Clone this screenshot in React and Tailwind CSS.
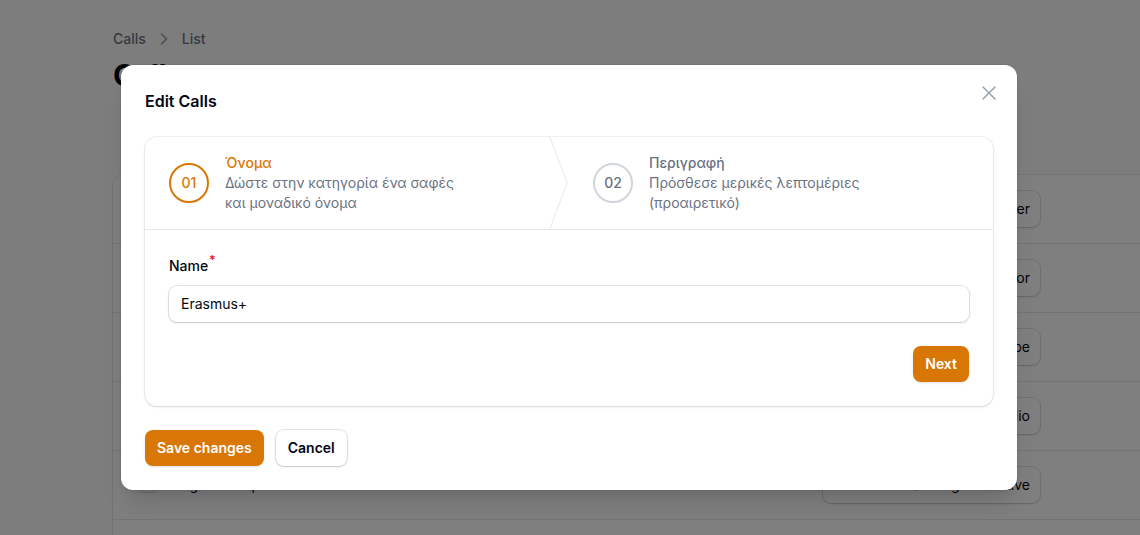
import { ChevronRight, X } from "lucide-react";

const rows = [
  { title: "Horizon Europe", role: "Project Partner" },
  { title: "Creative Europe", role: "Lead Coordinator" },
  { title: "Interreg", role: "Open Scope" },
  { title: "LIFE Programme", role: "Project Portfolio" },
  { title: "Digital Europe", role: "Strategic Initiative" },
];

function Steps() {
  return (
    <div className="grid grid-cols-2 border-b border-gray-200">
      <div className="relative flex">
        <div className="flex h-full items-center gap-x-4 px-6 py-4">
          <div className="flex h-10 w-10 shrink-0 items-center justify-center rounded-full border-2 border-[#d97706]">
            <span className="text-sm font-medium text-[#d97706]">01</span>
          </div>
          <div className="grid max-w-60 justify-items-start text-start">
            <span className="text-sm font-medium text-[#d97706]">Όνομα</span>
            <span className="text-sm text-gray-500">Δώστε στην κατηγορία ένα σαφές και μοναδικό όνομα</span>
          </div>
        </div>
        <svg
          className="absolute right-0 top-0 h-full w-5 text-gray-200"
          fill="none"
          preserveAspectRatio="none"
          viewBox="0 0 22 80"
        >
          <path d="M0 -2L20 40L0 82" stroke="currentColor" strokeLinejoin="round" vectorEffect="non-scaling-stroke" />
        </svg>
      </div>
      <div className="relative flex">
        <div className="flex h-full items-center gap-x-4 px-6 py-4">
          <div className="flex h-10 w-10 shrink-0 items-center justify-center rounded-full border-2 border-gray-300">
            <span className="text-sm font-medium text-gray-500">02</span>
          </div>
          <div className="grid max-w-60 justify-items-start text-start">
            <span className="text-sm font-medium text-gray-500">Περιγραφή</span>
            <span className="text-sm text-gray-500">Πρόσθεσε μερικές λεπτομέριες (προαιρετικό)</span>
          </div>
        </div>
      </div>
    </div>
  );
}

export default function App() {
  return (
    <div className="relative h-[535px] w-[1140px] overflow-hidden bg-[#fbfbfb] font-['Inter',sans-serif]">
      {/* page behind the modal */}
      <div className="pl-[113px] pt-[29px]">
        <nav className="flex items-center gap-x-2 text-sm font-medium text-gray-500">
          <span>Calls</span>
          <ChevronRight size={20} className="text-gray-400" />
          <span>List</span>
        </nav>
        <h1 className="mt-2 text-3xl font-bold leading-9 tracking-tight text-gray-950">Calls</h1>
        <div className="mt-[82px] w-[1050px] rounded-xl bg-white shadow-sm ring-1 ring-black/5">
          {rows.map((row) => (
            <div key={row.title} className="flex h-[69px] items-center border-b border-gray-200 pl-[27px]">
              <span className="h-4 w-4 shrink-0 rounded border border-gray-300 bg-white" />
              <span className="ml-5 flex-1 text-sm text-gray-950">{row.title}</span>
              <span className="flex h-9 w-[217px] shrink-0 items-center justify-end overflow-hidden rounded-lg bg-white px-2.5 text-sm text-gray-950 shadow-sm ring-1 ring-black/10">
                {row.role}
              </span>
              <span className="w-[123px] shrink-0" />
            </div>
          ))}
          <div className="h-[69px]" />
        </div>
      </div>

      <div className="absolute inset-0 bg-black/50" />

      {/* modal */}
      <div className="absolute inset-0 flex justify-center pr-[2px] pt-[65px]">
        <div className="relative flex h-fit w-full max-w-4xl flex-col rounded-xl bg-white shadow-xl ring-1 ring-black/5">
          <button type="button" className="absolute right-4 top-4 text-gray-400">
            <X size={24} strokeWidth={1.5} />
          </button>
          <div className="px-6 pt-6">
            <h2 className="text-base font-semibold leading-6 text-gray-950">Edit Calls</h2>
          </div>
          <div className="px-6 py-6">
            <div className="rounded-xl bg-white shadow-sm ring-1 ring-black/5">
              <Steps />
              <div className="p-6">
                <label className="flex h-6 items-start text-sm font-medium leading-6 text-gray-950">
                  Name<span className="-mt-1 ml-px text-xs font-medium leading-5 text-red-600">*</span>
                </label>
                <div className="mt-2 flex h-9 items-center rounded-lg bg-white px-3 shadow-sm ring-1 ring-black/10">
                  <span className="text-sm text-gray-950">Erasmus+</span>
                </div>
              </div>
              <div className="flex justify-end px-6 pb-6">
                <button type="button" className="rounded-lg bg-[#d97706] px-3 py-2 text-sm font-semibold text-white shadow-sm">
                  Next
                </button>
              </div>
            </div>
          </div>
          <div className="flex gap-x-3 px-6 pb-6">
            <button type="button" className="rounded-lg bg-[#d97706] px-3 py-2 text-sm font-semibold text-white shadow-sm">
              Save changes
            </button>
            <button type="button" className="rounded-lg bg-white px-3 py-2 text-sm font-semibold text-gray-950 shadow-sm ring-1 ring-black/10">
              Cancel
            </button>
          </div>
        </div>
      </div>
    </div>
  );
}
